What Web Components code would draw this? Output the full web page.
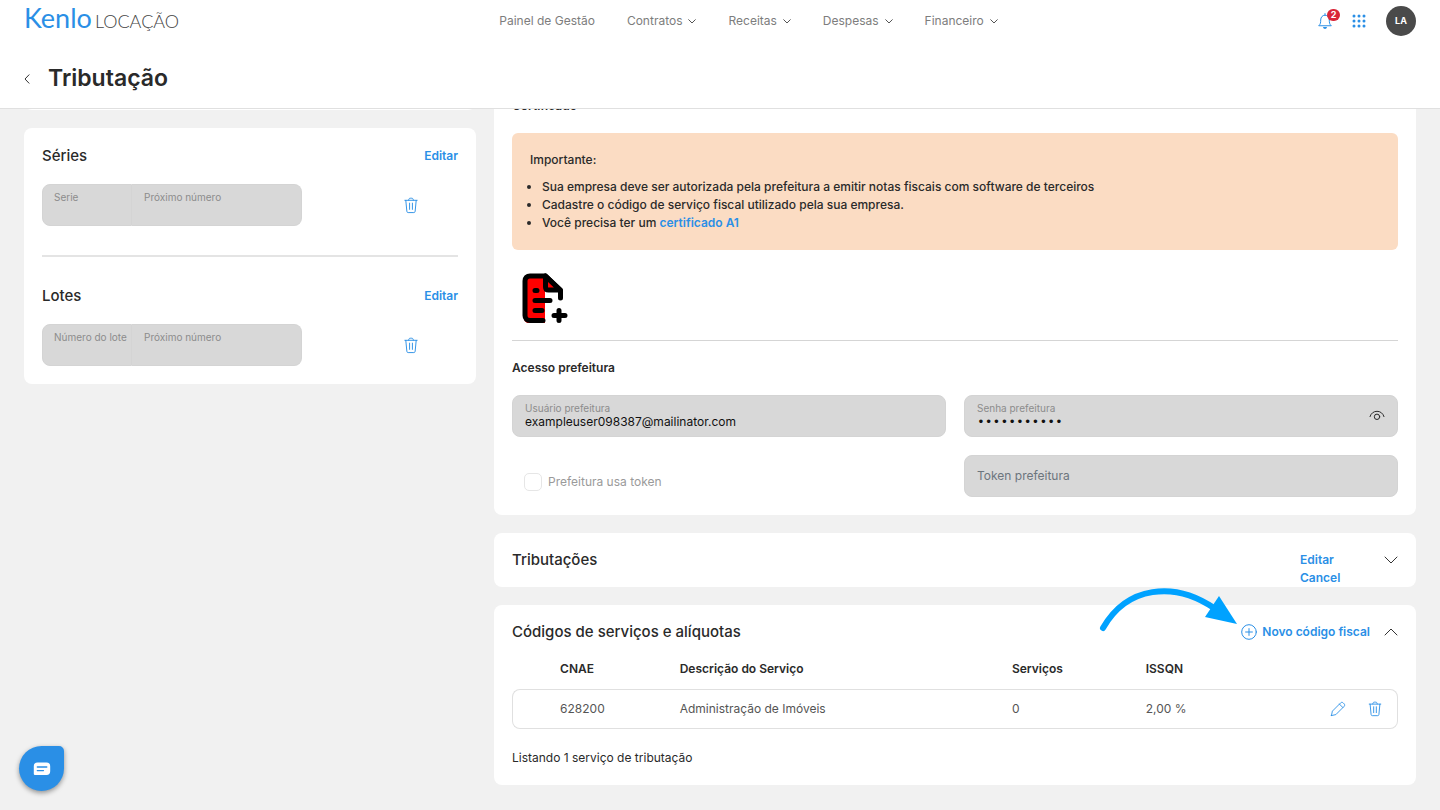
<!DOCTYPE html>
<html lang="pt-BR">
<head>
<meta charset="utf-8">
<meta name="viewport" content="width=device-width, initial-scale=1">
<title>Tributação - Kenlo Locação</title>
<style>
	:root {
		--blue: #2a8fe6;
		--ink: #2a2a2a;
		--muted: #8c8c8c;
		--line: #e0e0e0;
		--field: #d8d8d8;
	}
	body {
		margin: 0;
		background: #f1f1f1;
		color: var(--ink);
		font: 12px/18px Inter, "Liberation Sans", sans-serif;
	}
</style>
</head>
<body>
<tax-page></tax-page>

<script>
	// Classe base: clona o template estático para a raiz de sombra.
	class BaseElement extends HTMLElement {
		constructor() {
			super();
			this.attachShadow({ mode: 'open' });
			this.shadowRoot.append(this.constructor.template.content.cloneNode(true));
		}
		$(selector) { return this.shadowRoot.querySelector(selector) }
	}

	function html(markup) {
		let template = document.createElement('template');
		template.innerHTML = markup;
		return template;
	}

	// Desenhos dos ícones: [viewBox, conteúdo]
	const ICONS = {
		down: ['0 0 14 8', '<path d="M1 1l6 6 6-6"/>'],
		navdown: ['0 0 8 5', '<path d="M.7.7L4 4 7.3.7"/>'],
		up: ['0 0 14 8', '<path d="M1 7l6-6 6 6"/>'],
		back: ['0 0 6 10', '<path d="M5 .8L1 5l4 4.2"/>'],
		trash: ['0 0 16 18', '<path d="M1.5 3.5h13M5.5 3.3c0-1.3.8-2 1.7-2h1.6c.9 0 1.7.7 1.7 2M2.5 3.6l1.1 11.6c.1.8.6 1.3 1.4 1.3h6c.8 0 1.3-.5 1.4-1.3l1.1-11.6M6.5 6.5v6.6M9.5 6.5v6.6"/>'],
		pencil: ['0 0 18 18', '<path d="M1.6 16.4l1.1-5L12 2.1c.8-.8 2-.8 2.8 0l1.1 1.1c.8.8.8 2 0 2.8l-9.3 9.3-5 1.1zM10.6 3.5l3.9 3.9"/>'],
		plus: ['0 0 16 16', '<circle cx="8" cy="8" r="7.3"/><path d="M8 4.6v6.8M4.6 8h6.8"/>'],
		eye: ['0 0 16 12', '<path d="M1 6.6C2 3.3 4.7 1.3 8 1.3s6 2 7 5.3"/><circle cx="8" cy="6.8" r="2.7"/>'],
		bell: ['0 0 14 17', '<path d="M1 12.5c1.6-1.4 1.7-3 1.7-5.5C2.7 4.2 4.5 2.2 7 2.2s4.3 2 4.3 4.8c0 2.5.1 4.1 1.7 5.5zM7 .6v1.6"/><path d="M5 14h4c-.2 1.2-1 1.9-2 1.9S5.200 15.2 5 14z" fill="currentColor" stroke="none"/>'],
		apps: ['0 0 14 14', [2, 7, 12].map(y => [2, 7, 12].map(x => `<circle cx="${x}" cy="${y}" r="1.5" fill="currentColor" stroke="none"/>`).join('')).join('')],
		chat: ['0 0 18 14', '<path d="M4.5.5h9A3.7 3.7 0 0 1 17.2 4.2v5a3.7 3.7 0 0 1-3.7 3.7H1.6a.8.8 0 0 1-.8-.8V4.2A3.7 3.7 0 0 1 4.5.5z" fill="#fff" stroke="none"/><path d="M4.3 5h9.5M4.3 8.6h6.2" stroke="#2a8fe6" stroke-width="1.3"/>']
	};

	class UiIcon extends BaseElement {
		connectedCallback() {
			let [box, body] = ICONS[this.getAttribute('name')];
			this.$('svg').setAttribute('viewBox', box);
			this.$('svg').innerHTML = body;
		}
	}
	UiIcon.template = html(`
		<style>
			:host { display: inline-flex; flex: none; width: 16px; height: 16px; }
			svg {
				width: 100%;
				height: 100%;
				fill: none;
				stroke: currentColor;
				stroke-linecap: round;
				stroke-linejoin: round;
			}
		</style>
		<svg aria-hidden="true"></svg>
	`);
	customElements.define('ui-icon', UiIcon);

	// Botão azul sem borda; o texto e o ícone vêm pelo slot.
	class LinkButton extends BaseElement {
		connectedCallback() {
			if (this.title) this.$('button').setAttribute('aria-label', this.title);
		}
	}
	LinkButton.template = html(`
		<style>
			:host { display: inline-flex; color: var(--blue); }
			button {
				display: flex;
				align-items: center;
				gap: 5px;
				padding: 0;
				border: 0;
				background: none;
				color: inherit;
				font: inherit;
				font-weight: 600;
				cursor: pointer;
			}
		</style>
		<button type="button"><slot></slot></button>
	`);
	customElements.define('link-button', LinkButton);

	class NavItem extends BaseElement { }
	NavItem.template = html(`
		<style>
			:host { display: block; }
			a {
				display: flex;
				align-items: center;
				gap: 6px;
				color: #7d7d7d;
				text-decoration: none;
				white-space: nowrap;
			}
			ui-icon { width: 8px; height: 5px; color: #555; }
			:host([plain]) ui-icon { display: none; }
		</style>
		<a href="#"><slot></slot><ui-icon name="navdown"></ui-icon></a>
	`);
	customElements.define('nav-item', NavItem);

	class AppHeader extends BaseElement { }
	AppHeader.template = html(`
		<style>
			:host {
				display: block;
				position: relative;
				z-index: 1;
				background: #fff;
				border-bottom: 1px solid var(--line);
			}
			.bar {
				display: flex;
				align-items: center;
				justify-content: space-between;
				padding: 6px 24px;
			}
			.logo {
				display: flex;
				align-items: baseline;
				gap: 3px;
				padding-bottom: 6px;
				color: #444;
				font: 300 18px/18px Lato, sans-serif;
				text-decoration: none;
			}
			.logo b { color: var(--blue); font-size: 27px; font-weight: 400; line-height: 22px; }
			nav, .tools { display: flex; align-items: center; }
			nav { gap: 32px; }
			.tools { gap: 20px; }
			.bell { display: flex; position: relative; }
			.bell ui-icon { width: 14px; height: 17px; }
			.apps ui-icon { width: 14px; height: 14px; }
			.badge {
				position: absolute;
				top: -4px;
				left: 9px;
				min-width: 13px;
				border-radius: 6px;
				background: #d92638;
				color: #fff;
				font-size: 9px;
				font-weight: 700;
				line-height: 12px;
				text-align: center;
			}
			.avatar {
				width: 30px;
				height: 30px;
				padding: 0;
				border: 0;
				border-radius: 50%;
				background: #4a4a4a;
				color: #fff;
				font: 700 9px/30px Inter, sans-serif;
			}
			.title {
				display: flex;
				align-items: center;
				gap: 18px;
				padding: 21px 24px 14px;
			}
			.title link-button { color: #333; }
			.title ui-icon { width: 6px; height: 10px; }
			h1 { margin: 0; font-size: 23px; font-weight: 600; line-height: 31px; }
		</style>
		<div class="bar">
			<a class="logo" href="#"><b>Kenlo</b><span>LOCAÇÃO</span></a>
			<nav>
				<nav-item plain>Painel de Gestão</nav-item>
				<nav-item>Contratos</nav-item>
				<nav-item>Receitas</nav-item>
				<nav-item>Despesas</nav-item>
				<nav-item>Financeiro</nav-item>
			</nav>
			<div class="tools">
				<div class="bell">
					<link-button title="Notificações"><ui-icon name="bell"></ui-icon></link-button>
					<span class="badge">2</span>
				</div>
				<link-button class="apps" title="Aplicativos"><ui-icon name="apps"></ui-icon></link-button>
				<button class="avatar" type="button">LA</button>
			</div>
		</div>
		<div class="title">
			<link-button title="Voltar"><ui-icon name="back"></ui-icon></link-button>
			<h1>Tributação</h1>
		</div>
	`);
	customElements.define('app-header', AppHeader);

	class UiCard extends BaseElement { }
	UiCard.template = html(`
		<style>
			:host {
				display: block;
				position: relative;
				padding: 18px;
				border-radius: 8px;
				background: #fff;
			}
		</style>
		<slot></slot>
	`);
	customElements.define('ui-card', UiCard);

	// Título de seção com as ações à direita.
	class SectionHead extends BaseElement { }
	SectionHead.template = html(`
		<style>
			:host {
				display: flex;
				align-items: center;
				justify-content: space-between;
				height: 18px;
			}
			h2 { margin: 0; font-size: 15px; font-weight: 500; line-height: 18px; }
			.actions { display: flex; gap: 14px; height: 18px; }
		</style>
		<h2><slot></slot></h2>
		<div class="actions"><slot name="actions"></slot></div>
	`);
	customElements.define('section-head', SectionHead);

	// Campo cinza desabilitado com rótulo pequeno acima do valor.
	class FieldBox extends BaseElement {
		connectedCallback() {
			let input = this.$('input');
			let label = this.getAttribute('label');
			input.type = this.getAttribute('type') || 'text';
			input.value = this.getAttribute('value') || '';
			if (this.hasAttribute('bare')) {
				input.placeholder = label;
				input.setAttribute('aria-label', label);
				this.$('label').remove();
			} else {
				this.$('label').textContent = label;
			}
		}
	}
	FieldBox.template = html(`
		<style>
			:host {
				display: flex;
				align-items: center;
				box-sizing: border-box;
				height: 42px;
				min-width: 0;
				padding: 0 12px;
				border: 1px solid #d4d4d4;
				border-radius: 8px;
				background: var(--field);
			}
			.text { display: flex; flex: 1; flex-direction: column; min-width: 0; }
			label { color: var(--muted); font-size: 10px; line-height: 12px; white-space: nowrap; }
			input {
				width: 100%;
				height: 16px;
				padding: 0;
				border: 0;
				background: none;
				color: #111;
				font: inherit;
			}
			input[type="password"] { font: 13px "Liberation Mono", monospace; }
			input::placeholder { color: #6c757d; opacity: 1; }
		</style>
		<div class="text">
			<label for="input"></label>
			<input id="input" disabled>
		</div>
		<slot></slot>
	`);
	customElements.define('field-box', FieldBox);

	// Par de campos unidos (série / próximo número) com botão de excluir.
	class NumberRow extends BaseElement {
		connectedCallback() {
			// O rótulo precisa existir antes que field-box o leia.
			let first = document.createElement('field-box');
			first.className = 'first';
			first.setAttribute('label', this.getAttribute('label'));
			this.$('.pair').prepend(first);
		}
	}
	NumberRow.template = html(`
		<style>
			:host {
				display: grid;
				grid-template-columns: 5fr 3fr;
				align-items: center;
				margin-top: 18px;
			}
			.pair { display: grid; grid-template-columns: 90px 1fr; }
			.first { padding: 0 0 0 11px; border-radius: 8px 0 0 8px; }
			.last { border-left: 0; border-radius: 0 8px 8px 0; }
			link-button { justify-self: end; margin-right: 39px; }
			ui-icon { height: 17px; }
		</style>
		<div class="pair">
			<field-box class="last" label="Próximo número"></field-box>
		</div>
		<link-button title="Excluir"><ui-icon name="trash"></ui-icon></link-button>
	`);
	customElements.define('number-row', NumberRow);

	class NoticeBox extends BaseElement { }
	NoticeBox.template = html(`
		<style>
			:host {
				display: block;
				padding: 18px;
				border-radius: 6px;
				background: #fbdcc3;
				font-weight: 500;
			}
			ul { margin: 9px 0 0; padding-left: 12px; }
			a { color: var(--blue); font-weight: 600; text-decoration: none; }
		</style>
		<div>Importante:</div>
		<ul>
			<li>Sua empresa deve ser autorizada pela prefeitura a emitir notas fiscais com software de terceiros</li>
			<li>Cadastre o código de serviço fiscal utilizado pela sua empresa.</li>
			<li>Você precisa ter um <a href="#">certificado A1</a></li>
		</ul>
	`);
	customElements.define('notice-box', NoticeBox);

	class ServiceTable extends BaseElement { }
	ServiceTable.template = html(`
		<style>
			:host { display: block; margin-top: 18px; }
			table {
				width: 100%;
				border-spacing: 0;
				table-layout: fixed;
				text-align: left;
			}
			th { height: 30px; padding: 0 6px; font-weight: 600; line-height: 20px; vertical-align: top; }
			td {
				box-sizing: border-box;
				height: 40px;
				padding: 0 6px;
				border: solid var(--line);
				border-width: 1px 0;
				color: #555;
			}
			td:first-child { border-left-width: 1px; border-radius: 8px 0 0 8px; }
			td:last-child { border-right-width: 1px; border-radius: 0 8px 8px 0; }
			.tools { display: flex; justify-content: flex-end; gap: 21px; padding-right: 8px; }
			p { margin: 20px 0 0; }
		</style>
		<table>
			<colgroup>
				<col style="width: 4.75%"><col style="width: 13.5%"><col style="width: 37.5%">
				<col style="width: 15.1%"><col style="width: 10%"><col>
			</colgroup>
			<thead>
				<tr><th></th><th>CNAE</th><th>Descrição do Serviço</th><th>Serviços</th><th>ISSQN</th><th></th></tr>
			</thead>
			<tbody>
				<tr>
					<td></td><td>628200</td><td>Administração de Imóveis</td><td>0</td><td>2,00 %</td>
					<td>
						<div class="tools">
							<link-button title="Editar"><ui-icon name="pencil"></ui-icon></link-button>
							<link-button title="Excluir"><ui-icon name="trash"></ui-icon></link-button>
						</div>
					</td>
				</tr>
			</tbody>
		</table>
		<p>Listando 1 serviço de tributação</p>
	`);
	customElements.define('service-table', ServiceTable);

	class ChatButton extends BaseElement { }
	ChatButton.template = html(`
		<style>
			:host { position: fixed; bottom: 19px; left: 19px; z-index: 2; }
			button {
				display: flex;
				align-items: center;
				justify-content: center;
				width: 45px;
				height: 45px;
				padding: 0;
				border: 0;
				border-radius: 50% 5px 50% 50%;
				background: var(--blue);
				box-shadow: 0 2px 5px rgba(0, 0, 0, .4);
			}
			ui-icon { width: 18px; height: 14px; }
		</style>
		<button type="button" aria-label="Chat"><ui-icon name="chat"></ui-icon></button>
	`);
	customElements.define('chat-button', ChatButton);

	class TaxPage extends BaseElement { }
	TaxPage.template = html(`
		<style>
			:host { display: block; min-height: 100vh; }
			/* O conteúdo está rolado: o topo fica por baixo do cabeçalho. */
			main {
				display: grid;
				grid-template-columns: repeat(3, minmax(0, 1fr));
				align-items: start;
				gap: 18px;
				margin-top: -30px;
				padding: 0 24px 24px;
			}
			.side, .content { display: grid; gap: 18px; }
			.content { grid-column: span 2; }
			.previous { height: 31px; padding: 0; }
			.side section-head { height: 20px; }
			hr { margin: 29px 0; border: 0; border-top: 2px solid #e4e4e4; }
			h3 { margin: 0 0 18px; font-size: 12px; font-weight: 600; line-height: 18px; }
			.upload { display: block; margin-top: 18px; padding: 0 0 0 3px; border: 0; background: none; }
			.upload svg { display: block; width: 60px; height: 60px; }
			.content hr { margin: 12px 0 18px; border-top: 1px solid #d5d5d5; }
			.form { display: grid; grid-template-columns: 1fr 1fr; gap: 18px; }
			.token {
				display: flex;
				align-items: center;
				gap: 6px;
				padding: 12px 0 0 12px;
				color: #9a9a9a;
			}
			.token input {
				width: 18px;
				height: 18px;
				margin: 0;
				border: 1px solid #e6e6e6;
				border-radius: 5px;
				appearance: none;
			}
			.eye { width: 16px; height: 12px; }
			.links { display: grid; align-content: start; width: 70px; height: 18px; }
			.chevron { color: #333; }
			.chevron ui-icon { width: 14px; height: 8px; }
			.arrow {
				position: absolute;
				top: -17px;
				right: 178px;
				width: 140px;
				height: 46px;
				overflow: visible;
				pointer-events: none;
			}
		</style>
		<app-header></app-header>
		<main>
			<div class="side">
				<ui-card class="previous"></ui-card>
				<ui-card>
					<section-head>Séries<link-button slot="actions">Editar</link-button></section-head>
					<number-row label="Serie"></number-row>
					<hr>
					<section-head>Lotes<link-button slot="actions">Editar</link-button></section-head>
					<number-row label="Número do lote"></number-row>
				</ui-card>
			</div>
			<div class="content">
				<ui-card>
					<h3>Certificado</h3>
					<notice-box></notice-box>
					<button class="upload" type="button" aria-label="Adicionar certificado">
						<svg viewBox="0 0 60 60" fill="none" stroke="#000" stroke-width="5" stroke-linecap="round" stroke-linejoin="round">
							<path d="M10 7h20v48H14c-3 0-5-2-5-5V11c0-3 1-4 4-4z" fill="red" stroke="none"/>
							<path d="M30.5 8v11c0 2 1 3 3 3H45z" fill="red"/>
							<path d="M28 52.500H15c-3 0-5-2-5-5V13c0-3 2-5 5-5h15.500l15 14v8M20 22.500h2M20 32.500h15M20 42.500h7M44 42.500v10M39 47.500h11"/>
						</svg>
					</button>
					<hr>
					<h3>Acesso prefeitura</h3>
					<div class="form">
						<field-box label="Usuário prefeitura" value="exampleuser098387@mailinator.com"></field-box>
						<field-box label="Senha prefeitura" type="password" value="prefeitura1"><ui-icon class="eye" name="eye"></ui-icon></field-box>
						<label class="token"><input type="checkbox" disabled>Prefeitura usa token</label>
						<field-box label="Token prefeitura" bare></field-box>
					</div>
				</ui-card>
				<ui-card>
					<section-head>Tributações
						<div class="links" slot="actions">
							<link-button>Editar</link-button>
							<link-button>Cancel</link-button>
						</div>
						<link-button class="chevron" slot="actions" title="Expandir"><ui-icon name="down"></ui-icon></link-button>
					</section-head>
				</ui-card>
				<ui-card>
					<section-head>Códigos de serviços e alíquotas
						<link-button slot="actions"><ui-icon name="plus"></ui-icon>Novo código fiscal</link-button>
						<link-button class="chevron" slot="actions" title="Recolher"><ui-icon name="up"></ui-icon></link-button>
					</section-head>
					<service-table></service-table>
					<svg class="arrow" viewBox="0 0 140 46" aria-hidden="true">
						<path d="M5 40C29-2 76-7 116 20" fill="none" stroke="#00a2ff" stroke-width="6" stroke-linecap="round"/>
						<path d="M121 8l18 28-32-7z" fill="#00a2ff"/>
					</svg>
				</ui-card>
			</div>
		</main>
		<chat-button></chat-button>
	`);
	customElements.define('tax-page', TaxPage);
</script>
</body>
</html>
